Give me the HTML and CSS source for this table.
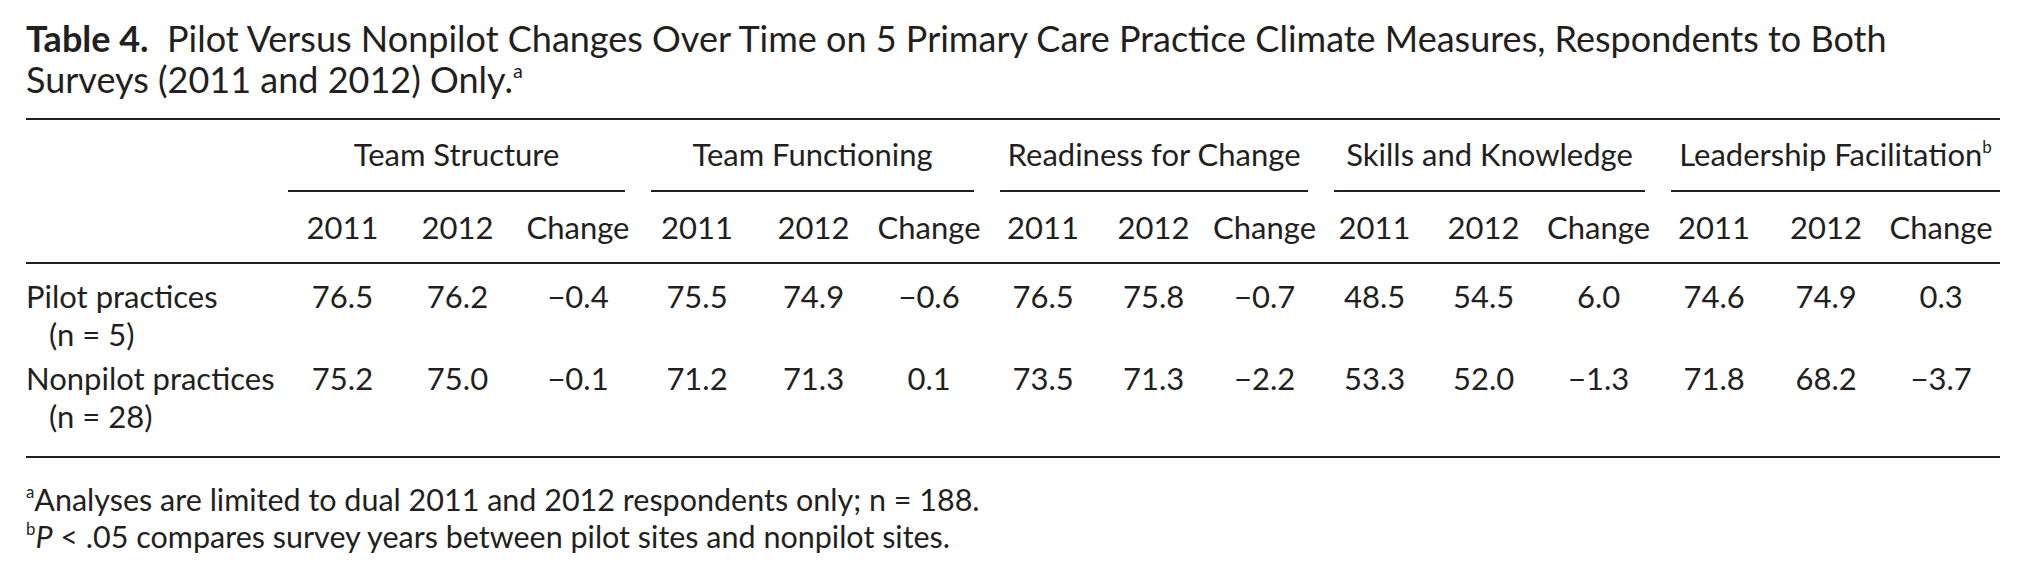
FILE: index.html
```html
<!DOCTYPE html>
<html lang="en">
<head>
<meta charset="utf-8">
<title>Table 4</title>
<link rel="stylesheet" href="styles.css">
</head>
<body>
<div class="page">
  <p class="caption"><b class="label">Table 4.</b>&nbsp; Pilot Versus Nonpilot Changes Over Time on 5 Primary Care Practice Climate Measures, Respondents to Both<br>Surveys (2011 and 2012) Only.<sup class="fn">a</sup></p>
  <table class="data">
    <colgroup>
      <col class="c-stub">
      <col class="c-a1"><col class="c-a2"><col class="c-a3">
      <col class="c-b1"><col class="c-b2"><col class="c-b3">
      <col class="c-c1"><col class="c-c2"><col class="c-c3">
      <col class="c-d1"><col class="c-d2"><col class="c-d3">
      <col class="c-e1"><col class="c-e2"><col class="c-e3">
    </colgroup>
    <thead>
      <tr class="groups">
        <th></th>
        <th colspan="3"><div class="grp first">Team Structure</div></th>
        <th colspan="3"><div class="grp">Team Functioning</div></th>
        <th colspan="3"><div class="grp">Readiness for Change</div></th>
        <th colspan="3"><div class="grp">Skills and Knowledge</div></th>
        <th colspan="3"><div class="grp last">Leadership Facilitation<sup class="fn">b</sup></div></th>
      </tr>
      <tr class="years">
        <th></th>
        <th>2011</th><th>2012</th><th>Change</th>
        <th>2011</th><th>2012</th><th>Change</th>
        <th>2011</th><th>2012</th><th>Change</th>
        <th>2011</th><th>2012</th><th>Change</th>
        <th>2011</th><th>2012</th><th>Change</th>
      </tr>
    </thead>
    <tbody>
      <tr class="row-first">
        <td class="stub">Pilot practices<br><span class="n">(n = 5)</span></td>
        <td>76.5</td><td>76.2</td><td>−0.4</td>
        <td>75.5</td><td>74.9</td><td>−0.6</td>
        <td>76.5</td><td>75.8</td><td>−0.7</td>
        <td>48.5</td><td>54.5</td><td>6.0</td>
        <td>74.6</td><td>74.9</td><td>0.3</td>
      </tr>
      <tr class="row-last">
        <td class="stub">Nonpilot practices<br><span class="n">(n = 28)</span></td>
        <td>75.2</td><td>75.0</td><td>−0.1</td>
        <td>71.2</td><td>71.3</td><td>0.1</td>
        <td>73.5</td><td>71.3</td><td>−2.2</td>
        <td>53.3</td><td>52.0</td><td>−1.3</td>
        <td>71.8</td><td>68.2</td><td>−3.7</td>
      </tr>
    </tbody>
  </table>
  <div class="notes">
    <p><sup class="fn">a</sup>Analyses are limited to dual 2011 and 2012 respondents only; n = 188.</p>
    <p><sup class="fn">b</sup><i>P</i> &lt; .05 compares survey years between pilot sites and nonpilot sites.</p>
  </div>
</div>
</body>
</html>
```
FILE: styles.css
```css
html, body {
  margin: 0;
  padding: 0;
  background: #ffffff;
}

body {
  font-family: "Lato", "Open Sans", sans-serif;
  color: #231f20;
}

.page {
  width: 1974px;
  padding: 18px 0 0 26px;
}

.caption {
  margin: 0;
  font-size: 36px;
  line-height: 41px;
}

.label {
  font-weight: 700;
}

.fn {
  font-size: 0.55em;
  line-height: 0;
  vertical-align: 0.75em;
}

.data {
  margin-top: 18px;
  width: 1974px;
  table-layout: fixed;
  border-collapse: collapse;
  border-top: 2px solid #231f20;
  border-bottom: 2px solid #231f20;
  font-size: 31px;
  line-height: 38px;
}

.c-stub { width: 262px; }
.c-a1 { width: 109px; } .c-a2 { width: 121px; } .c-a3 { width: 120px; }
.c-b1 { width: 118px; } .c-b2 { width: 115px; } .c-b3 { width: 116px; }
.c-c1 { width: 112px; } .c-c2 { width: 109px; } .c-c3 { width: 113px; }
.c-d1 { width: 107px; } .c-d2 { width: 111px; } .c-d3 { width: 119px; }
.c-e1 { width: 112px; } .c-e2 { width: 112px; } .c-e3 { width: 118px; }

.data th,
.data td {
  padding: 0;
  font-weight: 400;
  text-align: center;
  vertical-align: top;
  white-space: nowrap;
}

.groups th {
  padding-top: 15px;
}

.grp {
  margin: 0 13px;
  padding-bottom: 17px;
  border-bottom: 2px solid #231f20;
}

.grp.first { margin-left: 0; }
.grp.last { margin-right: 0; }

.years th {
  padding-top: 16px;
  padding-bottom: 16px;
  border-bottom: 2px solid #231f20;
}

.data td.stub {
  text-align: left;
}

.n {
  padding-left: 23px;
}

.row-first td {
  padding-top: 13px;
}

.row-last td {
  padding-top: 6px;
  padding-bottom: 21px;
}

.notes {
  padding-top: 23px;
  font-size: 30.5px;
  line-height: 37px;
}

.notes p {
  margin: 0;
}
```
